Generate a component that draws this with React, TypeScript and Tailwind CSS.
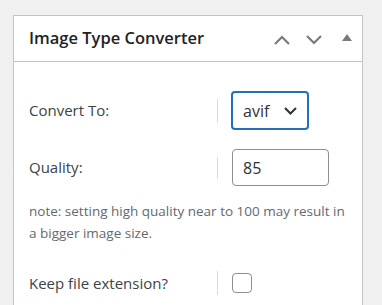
export default function App() {
  return (
    <div className="min-h-[305px] w-full bg-[#f0f0f1] pt-[15px] pl-[13px] font-['Open_Sans',sans-serif] text-[#1d2327]">
      <div className="w-[350px] border border-[#c3c4c7] bg-white">
        <div className="flex h-[46px] items-center border-b border-[#c3c4c7] pl-[15px] pr-[10px]">
          <h2 className="flex-1 text-[16.5px] font-semibold text-[#1d2327]">Image Type Converter</h2>
          <div className="flex items-center">
            <svg width="18" height="10" viewBox="0 0 18 10" className="mt-[2px]">
              <path d="M2 9 L9 2 L16 9" fill="none" stroke="#787c82" strokeWidth="2.2" />
            </svg>
            <svg width="18" height="10" viewBox="0 0 18 10" className="ml-[14px] mt-[2px]">
              <path d="M2 1 L9 8 L16 1" fill="none" stroke="#787c82" strokeWidth="2.2" />
            </svg>
            <svg width="10" height="7" viewBox="0 0 10 7" className="ml-[19px] mb-[2px]">
              <path d="M0 7 L5 0 L10 7 Z" fill="#787c82" />
            </svg>
          </div>
        </div>

        <div className="pl-[15px] pr-[12px] pt-[29px] pb-[20px]">
          <div className="flex h-[39px] items-center">
            <div className="w-[188px] text-[15px] text-[#3c434a]">Convert To:</div>
            <div className="h-[24px] w-px bg-[#dcdcde]" />
            <div className="ml-[13px] flex h-[39px] w-[78px] items-center rounded-[4px] border-2 border-[#2271b1] pl-[10px] pr-[10px] text-[16px] text-[#2c3338]">
              <span className="flex-1">avif</span>
              <svg width="13" height="8" viewBox="0 0 13 8">
                <path d="M1 1 L6.5 6.5 L12 1" fill="none" stroke="#2c3338" strokeWidth="2" />
              </svg>
            </div>
          </div>

          <div className="mt-[19px] flex h-[37px] items-center">
            <div className="w-[188px] text-[15px] text-[#3c434a]">Quality:</div>
            <div className="h-[22px] w-px bg-[#dcdcde]" />
            <div className="ml-[14px] flex h-[37px] w-[97px] items-center rounded-[4px] border border-[#8c8f94] pl-[10px] text-[16px] text-[#2c3338]">
              85
            </div>
          </div>

          <p className="mt-[14px] text-[13.5px] leading-[22px] text-[#646970]">
            note: setting high quality near to 100 may result in a bigger image size.
          </p>

          <div className="mt-[27px] flex h-[24px] items-center">
            <div className="w-[188px] text-[15px] text-[#3c434a]">Keep file extension?</div>
            <div className="h-[24px] w-px bg-[#dcdcde]" />
            <div className="ml-[14px] h-[20px] w-[20px] rounded-[4px] border border-[#8c8f94]" />
          </div>
        </div>
      </div>
    </div>
  );
}
